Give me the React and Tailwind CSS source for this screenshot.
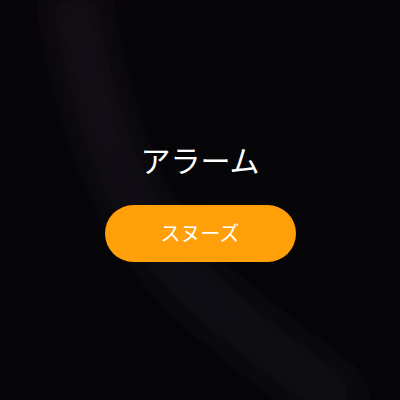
export default function App() {
  return (
    <div className="relative flex h-[400px] w-[400px] flex-col items-center justify-center overflow-hidden bg-[#060508] pt-[5px] font-['Noto_Sans_CJK_JP',sans-serif]">
      <svg
        className="pointer-events-none absolute inset-0"
        width="400"
        height="400"
        viewBox="0 0 400 400"
      >
        <defs>
          <filter id="blur" x="-50%" y="-50%" width="200%" height="200%">
            <feGaussianBlur stdDeviation="18" />
          </filter>
          <linearGradient id="streak" x1="0" y1="0" x2="1" y2="1">
            <stop offset="0" stopColor="#2a1a26" />
            <stop offset="0.5" stopColor="#1f1b26" />
            <stop offset="1" stopColor="#1c1a22" />
          </linearGradient>
        </defs>
        <path
          d="M72 -10 C 92 110, 125 225, 205 295 S 315 380, 350 410"
          stroke="url(#streak)"
          strokeWidth="44"
          fill="none"
          filter="url(#blur)"
          opacity="0.55"
        />
      </svg>
      <div className="relative flex flex-col items-center">
        <h1 className="text-[30px] leading-none font-normal text-white">
          アラーム
        </h1>
        <button className="mt-[31px] flex h-[57px] w-[191px] items-center justify-center rounded-full bg-[#ff9f0a] text-[20px] text-white">
          スヌーズ
        </button>
      </div>
    </div>
  );
}
